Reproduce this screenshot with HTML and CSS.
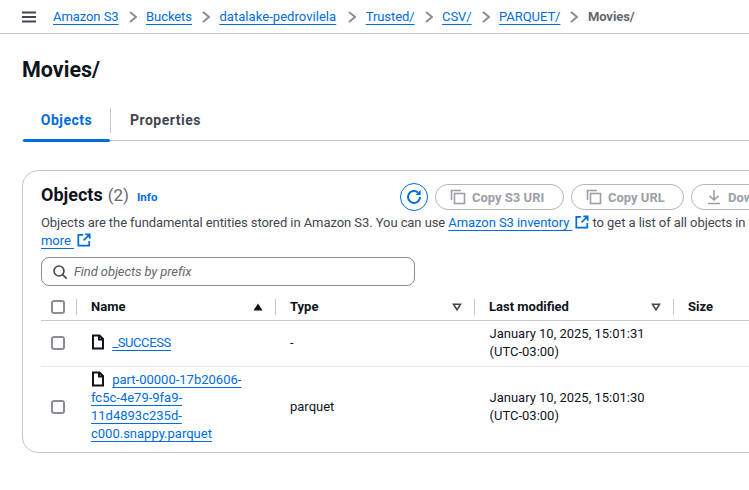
FILE: index.html

```html
<!DOCTYPE html>
<html>
  <head>
    <title>Movies/ - S3 bucket</title>
    <link rel="stylesheet" href="styles.css">
  </head>
  <body>
    <nav class="topbar">
      <svg class="menu-icon" width="14" height="12" viewBox="0 0 14 12"><path d="M0 1.500h14M0 6h14M0 10.500h14"/></svg>
      <a href="#">Amazon S3</a>
      <svg class="crumb-sep" width="8" height="12" viewBox="0 0 8 12"><path d="M1 1l6 5-6 5"/></svg>
      <a href="#">Buckets</a>
      <svg class="crumb-sep" width="8" height="12" viewBox="0 0 8 12"><path d="M1 1l6 5-6 5"/></svg>
      <a class="crumb-long" href="#">datalake-pedrovilela</a>
      <svg class="crumb-sep" width="8" height="12" viewBox="0 0 8 12"><path d="M1 1l6 5-6 5"/></svg>
      <a href="#">Trusted/</a>
      <svg class="crumb-sep" width="8" height="12" viewBox="0 0 8 12"><path d="M1 1l6 5-6 5"/></svg>
      <a href="#">CSV/</a>
      <svg class="crumb-sep" width="8" height="12" viewBox="0 0 8 12"><path d="M1 1l6 5-6 5"/></svg>
      <a href="#">PARQUET/</a>
      <svg class="crumb-sep" width="8" height="12" viewBox="0 0 8 12"><path d="M1 1l6 5-6 5"/></svg>
      <span class="crumb-current">Movies/</span>
    </nav>

    <main class="content">
      <h1>Movies/</h1>

      <div class="tabs">
        <a class="tab tab-active" href="#">Objects</a>
        <a class="tab" href="#">Properties</a>
      </div>

      <section class="card">
        <div class="card-head">
          <div class="card-title">
            <h2>Objects</h2>
            <span class="count">(2)</span>
            <a class="info" href="#">Info</a>
          </div>
          <div class="actions">
            <button class="refresh">
              <svg width="16" height="16" viewBox="0 0 16 16"><path d="M14 8a6 6 0 1 1-2-4.500"/><path class="fill" d="M14.600 1v5h-5z"/></svg>
            </button>
            <button class="pill copy-uri">
              <svg width="16" height="16" viewBox="0 0 16 16"><path d="M1.500 11V1.500H11"/><rect x="4.500" y="4.500" width="10" height="10"/></svg>
              Copy S3 URI
            </button>
            <button class="pill copy-url">
              <svg width="16" height="16" viewBox="0 0 16 16"><path d="M1.500 11V1.500H11"/><rect x="4.500" y="4.500" width="10" height="10"/></svg>
              Copy URL
            </button>
            <button class="pill download">
              <svg width="16" height="16" viewBox="0 0 16 16"><path d="M8 1v10M3.500 6.800L8 11l4.500-4.200M2 14.500h12"/></svg>
              Download
            </button>
          </div>
        </div>

        <p class="desc">Objects are the fundamental entities stored in Amazon S3. You can use <a href="#">Amazon S3 inventory </a><svg class="ext" width="14" height="14" viewBox="0 0 16 16"><path d="M7 2H1.500v12.500H14V9M9.500 1.500h5v5M14 2L7.500 8.500"/></svg> to get a list of all objects in your bucket. For others to access your objects, you'll need to explicitly grant them permissions. <a href="#">Learn<br>more </a><svg class="ext" width="14" height="14" viewBox="0 0 16 16"><path d="M7 2H1.500v12.500H14V9M9.500 1.500h5v5M14 2L7.500 8.500"/></svg></p>

        <label class="search">
          <svg width="16" height="16" viewBox="0 0 16 16"><circle cx="7" cy="7" r="5"/><path d="M10.600 10.600l4 4"/></svg>
          <input type="text" placeholder="Find objects by prefix">
        </label>

        <div class="row row-head">
          <div class="cell-check"><span class="checkbox"></span></div>
          <div class="col-head"><span>Name</span><svg width="10" height="8" viewBox="0 0 10 8"><path class="fill" d="M5 .5l4.500 7H.5z"/></svg></div>
          <div class="col-head"><span>Type</span><svg width="10" height="8" viewBox="0 0 10 8"><path d="M1.500 1.200h7L5 6.800z"/></svg></div>
          <div class="col-head"><span>Last modified</span><svg width="10" height="8" viewBox="0 0 10 8"><path d="M1.500 1.200h7L5 6.800z"/></svg></div>
          <div class="col-head"><span>Size</span></div>
        </div>

        <div class="row row-first">
          <div class="cell-check"><span class="checkbox"></span></div>
          <div class="cell cell-name">
            <svg class="file" width="14" height="16" viewBox="0 0 14 16"><path d="M2 1.500h6.500l3.500 3.500v9.500H2zM8 1.500v4h4"/></svg>
            <a class="file-link" href="#">_SUCCESS</a>
          </div>
          <div class="cell">-</div>
          <div class="cell">January 10, 2025, 15:01:31<br>(UTC-03:00)</div>
          <div class="cell"></div>
        </div>

        <div class="row row-last">
          <div class="cell-check"><span class="checkbox"></span></div>
          <div class="cell cell-name">
            <svg class="file" width="14" height="16" viewBox="0 0 14 16"><path d="M2 1.500h6.500l3.500 3.500v9.500H2zM8 1.500v4h4"/></svg>
            <a class="file-link" href="#">part-00000-17b20606-fc5c-4e79-9fa9-11d4893c235d-c000.snappy.parquet</a>
          </div>
          <div class="cell">parquet</div>
          <div class="cell">January 10, 2025, 15:01:30<br>(UTC-03:00)</div>
          <div class="cell"></div>
        </div>
      </section>
    </main>
  </body>
</html>
```

FILE: styles.css

```css
html, body {
  margin: 0;
  height: 490px;
  overflow: hidden;
}
body {
  font-family: Roboto, sans-serif;
  font-size: 13px;
  line-height: 18px;
  color: #0f141a;
  background-color: white;
}
a {
  color: #006ce0;
  text-decoration: underline;
  text-underline-offset: 3px;
}
svg {
  fill: none;
  stroke: currentColor;
  stroke-width: 2;
  flex: none;
}
svg .fill {
  fill: currentColor;
  stroke: none;
}

.topbar {
  display: flex;
  align-items: center;
  height: 33px;
  padding-left: 22px;
  border-bottom: 1px solid #c6c6cd;
  white-space: nowrap;
  letter-spacing: -0.07px;
}
.menu-icon {
  color: #424650;
  margin-right: 17px;
}
.crumb-sep {
  color: #8c8c94;
  margin: 0 9.500px 0 10px;
}
.crumb-long {
  margin-right: 2px;
  letter-spacing: 0.05px;
}
.crumb-current {
  font-weight: 700;
  color: #656871;
}

.content {
  padding: 0 0 0 22px;
}
h1 {
  margin: 0;
  padding-top: 21px;
  font-size: 21.5px;
  line-height: 30px;
  font-weight: 700;
}
.tabs {
  display: flex;
  align-items: center;
  height: 39px;
  margin-top: 16px;
  border-bottom: 1px solid #c6c6cd;
}
.tab {
  display: block;
  padding: 0 19px;
  font-size: 14px;
  line-height: 25px;
  font-weight: 700;
  letter-spacing: 0.5px;
  color: #424650;
  text-decoration: none;
}
.tab-active {
  position: relative;
  width: 87px;
  margin-left: 1px;
  padding: 0;
  text-align: center;
  color: #006ce0;
  border-right: 1px solid #c6c6cd;
}
.tab-active::after {
  content: "";
  position: absolute;
  left: 0;
  right: 0;
  bottom: -9px;
  height: 3px;
  border-radius: 2px;
  background-color: #006ce0;
}

.card {
  box-sizing: border-box;
  width: 1450px;
  height: 283px;
  margin-top: 29px;
  padding: 13px 0 0 18px;
  border: 1px solid #c6c6cd;
  border-radius: 16px;
}
.card-head {
  display: flex;
  align-items: center;
  height: 26px;
}
.card-title {
  display: flex;
  align-items: baseline;
  width: 359px;
  padding-bottom: 4px;
  flex: none;
}
h2 {
  margin: 0;
  font-size: 18px;
  line-height: 24px;
  font-weight: 700;
}
.count {
  margin-left: 5px;
  font-size: 17px;
  color: #656871;
}
.info {
  margin-left: 8px;
  font-size: 11.5px;
  font-weight: 700;
  text-decoration: none;
}
.actions {
  display: flex;
  align-items: center;
  gap: 7px;
}
.refresh {
  box-sizing: border-box;
  display: flex;
  align-items: center;
  justify-content: center;
  width: 28px;
  height: 28px;
  padding: 0;
  border: 1px solid #006ce0;
  border-radius: 50%;
  color: #006ce0;
  background-color: white;
}
.pill {
  box-sizing: border-box;
  display: flex;
  align-items: center;
  gap: 6px;
  height: 26px;
  padding: 0 18px 0 14px;
  border: 1px solid #b4b4bb;
  border-radius: 13px;
  font-family: inherit;
  font-size: 13px;
  font-weight: 700;
  color: #9ba0a8;
  background-color: white;
  white-space: nowrap;
}
.pill svg {
  stroke-width: 1.6;
}
.copy-uri { width: 129px; }
.copy-url { width: 113px; }

.desc {
  width: 1420px;
  margin: 4px 0 0 0;
  color: #424650;
  letter-spacing: -0.07px;
}
.ext {
  margin-left: 3px;
  color: #006ce0;
  vertical-align: -2px;
}

.search {
  box-sizing: border-box;
  display: flex;
  align-items: center;
  gap: 6px;
  width: 374px;
  height: 29px;
  margin-top: 7px;
  padding-left: 10px;
  border: 1px solid #8c8c94;
  border-radius: 8px;
  color: #424650;
}
.search svg {
  stroke-width: 1.6;
}
.search input {
  flex: 1;
  min-width: 0;
  border: none;
  outline: none;
  padding: 0;
  font-family: inherit;
  font-size: 13px;
  font-style: italic;
  letter-spacing: -0.1px;
}
.search input::placeholder {
  color: #656871;
  opacity: 1;
}

.row {
  display: grid;
  grid-template-columns: 36px 199px 199px 199px 199px;
  margin-right: 17px;
  align-items: center;
}
.row-head {
  height: 26px;
  padding-top: 3px;
  margin-top: 5px;
  border-bottom: 1px solid #c6c6cd;
  font-weight: 700;
}
.row-first {
  height: 43px;
  padding-bottom: 2px;
  border-bottom: 1px solid #e8e8ea;
}
.row-last {
  height: 80px;
}
.cell-check {
  padding-left: 10px;
}
.checkbox {
  display: block;
  box-sizing: border-box;
  width: 14px;
  height: 14px;
  border: 2px solid #8c8c94;
  border-radius: 3px;
}
.row-head .cell-check {
  height: 16px;
  display: flex;
  align-items: center;
  border-right: 1px solid #c6c6cd;
}
.col-head {
  box-sizing: border-box;
  display: flex;
  align-items: center;
  justify-content: space-between;
  height: 16px;
  padding: 0 12px 0 14px;
  border-right: 1px solid #c6c6cd;
}
.col-head svg {
  color: #424650;
  stroke-width: 1.6;
}
.col-head:nth-child(2) svg {
  color: #0f141a;
}
.cell {
  padding: 0 14px;
}
.cell:nth-child(4) {
  padding-left: 14.500px;
}
.cell-name {
  padding-right: 24px;
}
.file {
  color: #0f141a;
  margin-right: 4px;
  vertical-align: -3px;
  stroke-width: 2;
}
.row-first .file-link {
  letter-spacing: -0.4px;
}
```
